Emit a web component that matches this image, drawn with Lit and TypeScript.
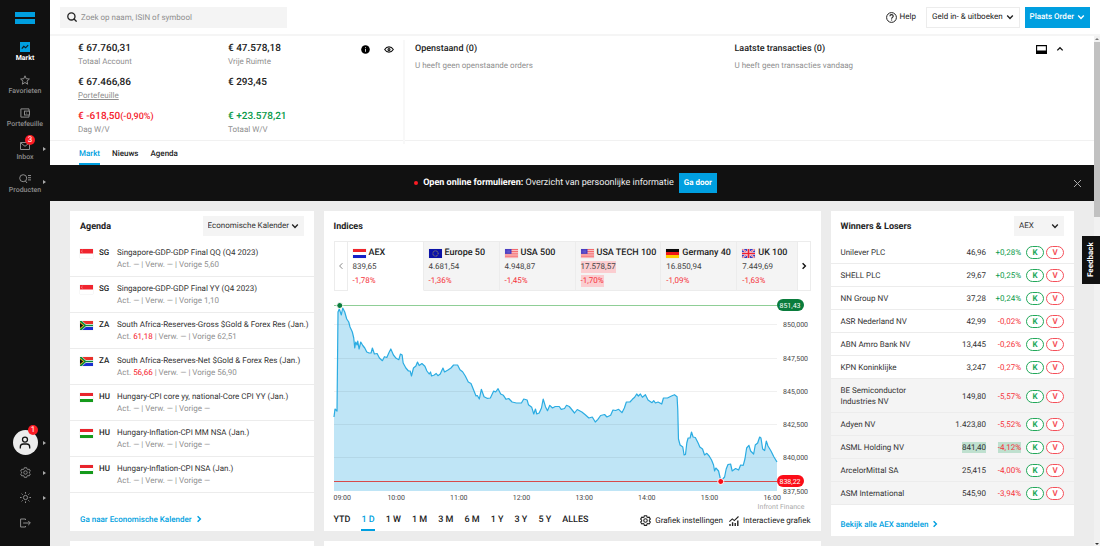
import { LitElement, html, svg, css, nothing } from "lit";
import { customElement, state } from "lit/decorators.js";
import { classMap } from "lit/directives/class-map.js";

type Nav = { id: string; label: string; icon: unknown; badge?: number; more?: boolean };
type Event = { cc: string; title: string; act: string; prev: string };
type Index = { cc: string; name: string; value: string; change: string; flash?: boolean };
type Stock = { name: string; price: string; change: string; flash?: boolean; low?: boolean };

const chevron = (w = 8) => html`<svg class="ico" width=${w} height=${w} viewBox="0 0 8 8"><path d="M1.2 2.6 4 5.4 6.8 2.6" fill="none" stroke="currentColor" stroke-width="1.4" /></svg>`;
const chevronRight = (w = 8, s = 1.4) => html`<svg class="ico" width=${w} height=${w} viewBox="0 0 8 8"><path d="M2.6 1.2 5.4 4 2.6 6.8" fill="none" stroke="currentColor" stroke-width=${s} /></svg>`;

const gear = (size: number, sw: number) => html`<svg class="ico" width=${size} height=${size} viewBox="0 0 12 12" fill="none" stroke="currentColor" stroke-width=${sw} stroke-linejoin="round">
  <path d="M4.7.8h2.6l.3 1.4 1 .6 1.4-.5 1.3 2.2-1.1 1v1.1l1.1 1-1.3 2.2-1.4-.5-1 .6-.3 1.4H4.7l-.3-1.4-1-.6-1.4.5L.7 7.600l1.100-1V5.500L.7 4.500 2 2.300l1.400.5 1-.6z" />
  <circle cx="6" cy="6" r="1.900" /></svg>`;

const NAV: Nav[] = [
  { id: "markt", label: "Markt", icon: html`<svg width="10" height="10" viewBox="0 0 10 10"><rect width="10" height="10" fill="#009fe0" /><path d="M1.800 6.700 3.800 4.400 5.600 5.800 8.200 3.200" fill="none" stroke="#0d1a22" stroke-width="1.200" /></svg>` },
  { id: "favorieten", label: "Favorieten", icon: html`<svg width="10" height="10" viewBox="0 0 10 10"><path d="M5 .8 6.200 3.700 9.400 4 7 6.100 7.700 9.200 5 7.500 2.300 9.200 3 6.100.6 4 3.800 3.700z" fill="none" stroke="currentColor" stroke-width="1" /></svg>` },
  { id: "portefeuille", label: "Portefeuille", icon: html`<svg width="10" height="10" viewBox="0 0 10 10" fill="none" stroke="currentColor"><path d="M9 3V.9H.9v8.200H9V7.200" stroke-width="1" /><rect x="4.500" y="3.100" width="5" height="3.900" stroke-width="1" /><circle cx="6.600" cy="5" r=".5" fill="currentColor" stroke="none" /></svg>` },
  { id: "inbox", label: "Inbox", badge: 3, more: true, icon: html`<svg width="10" height="10" viewBox="0 0 10 10" fill="none" stroke="currentColor"><path d="M.5 1.500h9v7h-9zM.8 2 5 5.300 9.200 2" stroke-width="1" /></svg>` },
  { id: "producten", label: "Producten", more: true, icon: html`<svg width="12" height="10" viewBox="0 0 12 10" fill="none" stroke="currentColor"><circle cx="4.200" cy="4.200" r="3.500" /><path d="M6.300 6.900 8 9M9 1.500h3M9 3.700h3M9 5.900h3" /></svg>` },
];

const EVENTS: Event[] = [
  { cc: "SG", title: "Singapore-GDP-GDP Final QQ (Q4 2023)", act: "", prev: "5,60" },
  { cc: "SG", title: "Singapore-GDP-GDP Final YY (Q4 2023)", act: "", prev: "1,10" },
  { cc: "ZA", title: "South Africa-Reserves-Gross $Gold & Forex Res (Jan.)", act: "61,18", prev: "62,51" },
  { cc: "ZA", title: "South Africa-Reserves-Net $Gold & Forex Res (Jan.)", act: "56,66", prev: "56,90" },
  { cc: "HU", title: "Hungary-CPI core yy, national-Core CPI YY (Jan.)", act: "", prev: "—" },
  { cc: "HU", title: "Hungary-Inflation-CPI MM NSA (Jan.)", act: "", prev: "—" },
  { cc: "HU", title: "Hungary-Inflation-CPI NSA (Jan.)", act: "", prev: "—" },
];

const INDICES: Index[] = [
  { cc: "NL", name: "AEX", value: "839,65", change: "-1,78%" },
  { cc: "EU", name: "Europe 50", value: "4.681,54", change: "-1,36%" },
  { cc: "US", name: "USA 500", value: "4.948,87", change: "-1,45%" },
  { cc: "US", name: "USA TECH 100", value: "17.578,57", change: "-1,70%", flash: true },
  { cc: "DE", name: "Germany 40", value: "16.850,94", change: "-1,09%" },
  { cc: "GB", name: "UK 100", value: "7.449,69", change: "-1,63%" },
];

const STOCKS: Stock[] = [
  { name: "Unilever PLC", price: "46,96", change: "+0,28%" },
  { name: "SHELL PLC", price: "29,67", change: "+0,25%" },
  { name: "NN Group NV", price: "37,28", change: "+0,24%" },
  { name: "ASR Nederland NV", price: "42,99", change: "-0,02%" },
  { name: "ABN Amro Bank NV", price: "13,445", change: "-0,26%" },
  { name: "KPN Koninklijke", price: "3,247", change: "-0,27%" },
  { name: "BE Semiconductor Industries NV", price: "149,80", change: "-5,57%", low: true },
  { name: "Adyen NV", price: "1.423,80", change: "-5,52%", low: true },
  { name: "ASML Holding NV", price: "841,40", change: "-4,12%", low: true, flash: true },
  { name: "ArcelorMittal SA", price: "25,415", change: "-4,00%", low: true },
  { name: "ASM International", price: "545,90", change: "-3,94%", low: true },
];

const RANGES = ["YTD", "1 D", "1 W", "1 M", "3 M", "6 M", "1 Y", "3 Y", "5 Y", "ALLES"];

// Flag drawings, all on an 18 x 12 field.
const FLAGS: Record<string, unknown> = {
  SG: svg`<path fill="#fff" d="M0 0h18v12H0z"/><path fill="#f0252f" d="M0 0h18v6H0z"/><path d="M3.400 1.300a1.900 1.900 0 0 0 0 3.400" fill="none" stroke="#fbb8bb" stroke-width=".8"/>`,
  ZA: svg`<path fill="#fff" d="M0 0h18v12H0z"/><path fill="#e8302a" d="M3 0h15v4H8z"/><path fill="#1a2fd0" d="M3 12h15V8H8z"/><path fill="#0b8a3e" d="M0 0h2.500L8 4.900h10v2.200H8L2.500 12H0z"/><path fill="#ffb915" d="M0 1.300 6 6 0 10.700z"/><path fill="#111" d="M0 2.700 4.400 6 0 9.300z"/>`,
  HU: svg`<path fill="#fff" d="M0 0h18v12H0z"/><path fill="#e8242c" d="M0 0h18v4H0z"/><path fill="#159a1c" d="M0 8h18v4H0z"/>`,
  NL: svg`<path fill="#fff" d="M0 0h18v12H0z"/><path fill="#f0252c" d="M0 0h18v4H0z"/><path fill="#1420c8" d="M0 8h18v4H0z"/>`,
  EU: svg`<path fill="#0b12a8" d="M0 0h18v12H0z"/><circle cx="9" cy="6" r="3.600" fill="none" stroke="#d8c840" stroke-width="1.100" stroke-dasharray="1 .885"/>`,
  US: svg`<path fill="#fbdcdc" d="M0 0h18v12H0z"/><path d="M0 .8h18M0 3.200h18M0 5.600h18M0 8h18M0 10.400h18" stroke="#f25a5e" stroke-width="1.300"/><path fill="#4438c0" d="M0 0h9v6.500H0z"/><path d="M1 1.600h7M1 3.300h7M1 5h7" stroke="#b9b5ee" stroke-width=".6" stroke-dasharray=".8 .9"/>`,
  DE: svg`<path fill="#0a0a0a" d="M0 0h18v4H0z"/><path fill="#f01818" d="M0 4h18v4H0z"/><path fill="#ffce00" d="M0 8h18v4H0z"/>`,
  GB: svg`<path fill="#3a3fc0" d="M0 0h18v12H0z"/><path d="M0 0l18 12M18 0L0 12" stroke="#fff" stroke-width="2.200"/><path d="M0 0l18 12M18 0L0 12" stroke="#f03040" stroke-width="1"/><path d="M9 0v12M0 6h18" stroke="#fff" stroke-width="3.400"/><path d="M9 0v12M0 6h18" stroke="#f02030" stroke-width="2.300"/>`,
};
const flag = (cc: string) => html`<svg class="flag" width="13" height="9" viewBox="0 0 18 12" preserveAspectRatio="none" role="img" aria-label=${cc}>${FLAGS[cc]}</svg>`;

// Intraday line of the AEX, x 0..442 and y 0..195.
const LINE =
  "0,121 1,113 3,115 4,16 5.300,13 7.300,19 8.700,12 10.700,16 12.700,23 14.700,26 16,31 18.300,36 19.700,42 20.700,52 21.700,46 23,49 23.700,45 25,53 26.700,46 28.700,49.500 30.700,52 32.700,56 35,57 37,57 38.300,52 40.300,58 43,57.500 45.300,62 48.300,64.700 50.300,60.700 52.700,61.500 55,56.300 56.700,53 59.300,59 62,62.300 64.700,63.700 66.300,58 68,59 69,67 71.700,72 74.300,75 76,75 77.300,80 79.300,72 81.700,70 83.300,66 85,69.500 87.700,67.500 90.700,70.300 92.700,75 95,78 96.300,76 97.300,80 100,79 102,77.500 103.700,79.700 106,78 108.700,72 110.300,76 113.300,74.300 116.700,72 119.300,69 123.300,69 125.700,73.700 128.300,75.700 131,80 134,86 136.700,87.500 139.300,94 141.700,100 143,99.500 145,103 147,93.300 149.700,100.700 152.700,102.300 156,102 159.300,95 161.300,96 163.700,92.700 166.300,98 169,99.300 171.700,103.300 174.300,102.500 177.700,106 182,107 187,107 189.300,103 192.700,104 194,108.700 197.300,111.300 199.300,118 201,113 202.300,118 204.700,117 207,112 208.700,103 211,110.700 213,114.700 215.300,109.300 218,112 220.700,110.500 224.700,110.500 226.700,113.300 230,112.500 232,109.300 234.700,110.500 236,112 240,117 242.700,113.500 247.300,116 250.700,118.700 254.300,122 257.700,121 260.700,126 263.300,123.300 266,119.500 270,118.500 272.300,121 276,119.300 278.300,114 281,114.500 284,113.300 287.300,116.700 289.700,112 291.700,106 295.300,106 297.700,103.300 300,101.300 302,98 303.700,100 305.700,98 307.700,101.300 310.700,98.700 313.300,104 317.300,106.700 319,104.700 320.700,107 323.300,106 327,108 328.700,102 332.700,102 336.700,100 339.700,98.700 342.300,100.700 343,114 343.700,143 345.300,149 348,151 349.300,159 350.700,158.500 352,147 353.300,142 355.300,142 356.700,136 358.300,141 360.500,141.500 363.300,147 365,151 367.700,153 369.700,159 372,157.300 374.300,160 376.700,164 378.700,169 379.700,175 381,172 383.700,175 386,185 389.700,181 391.300,173 393,168.700 395.700,168 397.300,175 400.700,172.500 403.700,174 405.700,169 408.300,169.300 410,163 411.700,152 414,149.300 415.700,155 418.700,158 420.300,149 422.700,147 424.700,141 426,142 427.700,153 429.700,154.500 431.300,145 433,150 436,155 438.700,160.500 442,166";

const GRID = [
  { y: 28, label: "850,000" },
  { y: 62, label: "847,500" },
  { y: 95, label: "845,000" },
  { y: 128, label: "842,500" },
  { y: 161, label: "840,000" },
  { y: 195, label: "837,500" },
];
const HOURS = ["10:00", "11:00", "12:00", "13:00", "14:00", "15:00", "16:00"];

@customElement("app-root")
export class AppRoot extends LitElement {
  @state() private range = "1 D";
  @state() private index = 0;

  static styles = css`
    :host {
      display: flex;
      height: 100vh;
      overflow: hidden;
      position: relative;
      background: #ececec;
      color: #333;
      font: 400 8px/12px Roboto, "Liberation Sans", sans-serif;
      text-rendering: geometricPrecision;
    }
    * { box-sizing: border-box; }
    button, input, select { font: inherit; color: inherit; margin: 0; border: 0; background: none; padding: 0; border-radius: 0; text-rendering: inherit; }
    button, select { cursor: pointer; }
    a { color: inherit; text-decoration: none; }
    ul, dl, dd, h2, p { margin: 0; padding: 0; list-style: none; }
    svg { display: block; flex: none; }

    .side { width: 50px; flex: none; background: #111; color: #8c8c8c; display: flex; flex-direction: column; justify-content: space-between; padding: 12px 0 11px; }
    .logo { display: grid; gap: 2px; width: 20px; margin: 0 auto 18px; }
    .logo i { height: 5px; background: #009fe0; }
    .nav { display: flex; flex-direction: column; align-items: center; height: 33px; font: 500 7px/9px Roboto, sans-serif; position: relative; width: 100%; }
    .nav svg { margin-bottom: 2px; }
    .nav.on { color: #fff; font-weight: 700; }
    .badge { position: absolute; background: #fb1c24; color: #fff; border-radius: 50%; width: 10px; height: 10px; font: 400 8px/10px Roboto, sans-serif; text-align: center; }
    .nav .badge { left: 25px; top: -6px; }
    .more { position: absolute; left: 43px; width: 0; height: 0; border: 2px solid transparent; border-left: 3px solid #aaa; border-right: 0; top: 50%; margin-top: -2px; }
    .nav .more { top: 8px; }
    .tool { position: relative; width: 50px; height: 25px; display: grid; place-items: center; }
    .avatar { width: 25px; height: 25px; border-radius: 50%; background: #ececec; color: #111; display: grid; place-items: center; }
    .tool .badge { left: 28px; top: -5px; }
    .tools { display: grid; }
    .tools .tool:first-child { margin-bottom: 5px; }

    .main { flex: 1; min-width: 0; display: flex; flex-direction: column; }
    .top { height: 36px; flex: none; background: #fff; border-bottom: 2px solid #f5f5f5; display: flex; align-items: center; padding: 0 10px; }
    .search { display: flex; align-items: center; gap: 4px; background: #f4f4f4; width: 227px; height: 21px; padding: 0 7px; }
    .search input { flex: 1; min-width: 0; outline: 0; height: 21px; }
    .search input::placeholder { color: #8f8f8f; opacity: 1; }
    .help { margin-left: auto; display: flex; align-items: center; gap: 3px; color: #222; }
    .btn { height: 21px; display: flex; align-items: center; gap: 3px; padding: 0 5px; color: #222; }
    .btn.line { border: 1px solid #ececec; margin: 0 5px 0 10px; }
    .btn.fill { background: #009fe0; color: #fff; font-weight: 500; }

    .body { flex: 1; min-height: 0; display: flex; }
    .page { flex: 1; min-width: 0; overflow: hidden; }
    .bar { width: 6px; flex: none; background: #f1f1f1; display: flex; flex-direction: column; align-items: center; justify-content: space-between; padding: 2px 0 1px; }
    .bar .up, .bar .dn { border: 2px solid transparent; border-bottom: 2px solid #777; border-top: 0; }
    .bar .dn { border-top: 2px solid #333; border-bottom: 0; }
    .bar .rail { flex: 1; width: 100%; padding-top: 2px; }
    .bar .thumb { height: 35%; background: #c1c1c1; }

    .account { display: grid; grid-template-columns: 34% 1fr; background: #fff; height: 105px; border-bottom: 1px solid #f1f1f1; }
    .totals { display: grid; grid-template-columns: 283px 1fr; padding: 2px 0 0 28px; border-right: 2px solid #f8f8f8; margin: 4px 0 5px; }
    .totals dl { display: grid; grid-template-columns: 150px 133px; align-content: start; }
    .totals dl div { height: 34px; }
    .totals dt { font: 500 10px/14px Roboto, sans-serif; color: #222; }
    .totals dt small { font-size: 9px; }
    .totals dd { line-height: 12px; color: #8f8f8f; }
    .totals dd a { text-decoration: underline; }
    .peek { display: flex; gap: 14px; align-items: center; height: 14px; color: #111; }
    .orders { display: grid; grid-template-columns: 320fr 330fr; padding: 6px 30px 0 10px; }
    .orders h2 { font: 500 9px/14px Roboto, sans-serif; color: #222; display: flex; align-items: center; }
    .orders p { color: #8f8f8f; padding-top: 4px; }
    .orders .ctl { margin-left: auto; display: flex; gap: 9px; align-items: center; color: #111; }
    .neg { color: #f5333b; }
    .totals dt.neg { color: #f5222d; }
    .pos, .totals dt.pos { color: #0a9a4a; }

    .tabs { display: flex; gap: 12px; background: #fff; height: 24px; padding: 0 29px; }
    .tabs a { line-height: 25px; font-weight: 500; color: #222; height: 24px; }
    .tabs a.on { color: #009fe0; border-bottom: 2px solid #009fe0; }

    .banner { height: 36px; background: #111; color: #eee; display: flex; align-items: center; padding: 0 12px 0 8px; font-size: 9px; }
    .banner p { flex: 1; display: flex; align-items: center; justify-content: center; gap: 5px; }
    .banner i { width: 4px; height: 4px; border-radius: 50%; background: #fb1c24; }
    .banner b { color: #fff; font-weight: 700; }
    .banner .go { background: #009fe0; color: #fff; font: 700 8px/20px Roboto, sans-serif; height: 20px; padding: 0 5px; }
    .banner .x { color: #aaa; }

    .cards { display: grid; grid-template-columns: repeat(4, minmax(0, 1fr)); gap: 10px; padding: 10px 20px; align-items: start; }
    .col { display: grid; grid-template-columns: minmax(0, 1fr); gap: 10px; }
    .col.wide { grid-column: span 2; }
    .card { background: #fff; min-height: 20px; }
    .head { display: flex; align-items: center; justify-content: space-between; height: 30px; padding: 0 10px; }
    .head h2 { font: 700 9px/12px Roboto, sans-serif; color: #222; padding-top: 2px; }
    .pick { display: grid; background: #f4f4f4; height: 20px; align-items: center; }
    .pick select, .pick .ico { grid-area: 1 / 1; }
    .pick .ico { justify-self: end; margin-right: 5px; pointer-events: none; color: #222; }
    .pick select { appearance: none; height: 20px; padding: 0 13px 0 5px; outline: 0; width: 100%; }
    .pick.cal { width: 101px; }
    .pick.aex { width: 50px; }
    .flag { box-shadow: 0 0 1px #ccc; }

    .events li { display: grid; grid-template-columns: 13px 12px 1fr; column-gap: 6px; height: 36px; padding: 6px 10px 0; border-bottom: 1px solid #ececec; align-items: start; white-space: nowrap; }
    .events .flag { margin-top: 2px; }
    .events b { font-weight: 500; line-height: 12px; color: #222; }
    .events .dim { color: #8f8f8f; line-height: 11px; }
    .events .dim em { font-style: normal; color: #f5222d; }
    .all { display: flex; align-items: start; gap: 3px; color: #009fe0; font-weight: 500; padding: 0 10px; line-height: 12px; }
    .all .ico { margin-top: 2px; }
    .agenda .all { padding-top: 20px; height: 38px; line-height: 13px; }
    .wl .all { padding-top: 13px; height: 31px; line-height: 13px; }

    .strip { display: flex; margin: 0 10px; height: 50px; border: 1px solid #ececec; }
    .strip .arrow { width: 13px; flex: none; display: grid; place-items: center; background: #fff; }
    .strip .arrow.prev { border-right: 1px solid #ececec; color: #888; }
    .strip .arrow.next { border-left: 1px solid #ececec; color: #111; }
    .quotes { flex: 1; min-width: 0; display: flex; overflow: hidden; margin: -1px 0; }
    .quote { flex: none; min-width: 76px; padding: 5px 4px 0 5px; text-align: left; background: #f4f4f4; border: 1px solid #ececec; border-left: 0; display: grid; align-content: start; justify-items: start; row-gap: 2px; color: #444; }
    .quote.on { background: #fff; border-bottom-color: #fff; }
    .quote strong { display: flex; align-items: center; gap: 3px; font: 500 9px/12px Roboto, sans-serif; color: #222; white-space: nowrap; }
    .quote span { line-height: 12px; }
    .quote .neg { color: #f5333b; }
    .quote .flash { background: #fbcdd0; }

    .chart { display: grid; grid-template-columns: 1fr 34px; margin: 5px 10px 0; }
    .plot { width: 100%; height: 195px; overflow: visible; display: grid; }
    .plot svg { grid-area: 1 / 1; width: 100%; height: 195px; overflow: visible; }
    .axis { overflow: visible; font-size: 7px; fill: #444; }
    .hours { display: grid; grid-template-columns: 1fr repeat(7, 2fr); grid-column: 1 / 3; margin-right: 7px; text-align: center; font-size: 7px; line-height: 14px; color: #444; }
    .hours span:first-child { text-align: left; }
    .source { grid-column: 1 / 3; text-align: right; color: #aaa; font-size: 7px; line-height: 5px; padding-right: 6px; }
    .foot { display: flex; align-items: center; padding: 0 10px; height: 21px; }
    .ranges { display: flex; gap: 11px; height: 21px; }
    .ranges button { display: block; height: 21px; font: 500 9px/21px Roboto, sans-serif; color: #222; box-shadow: none; }
    .ranges button.on { color: #009fe0; box-shadow: inset 0 -2px #009fe0; }
    .opts { margin-left: auto; display: flex; gap: 6px; }
    .opts a { display: flex; align-items: center; gap: 4px; color: #222; }

    table { width: 100%; table-layout: fixed; border-spacing: 0; }
    td { padding: 5px 0 4px; border-bottom: 1px solid #ececec; text-align: right; line-height: 11px; vertical-align: middle; }
    td.name { text-align: left; padding: 6px 0 5px 10px; }
    tr.low td { background: #f4f4f4; }
    .c-price { width: 50px; }
    .c-pct { width: 35px; }
    .c-act { width: 53px; }
    td .hl { background: #bfe0cf; padding: 1px 0; }
    .acts { display: flex; gap: 2px; padding-left: 5px; }
    .pill { width: 18px; height: 13px; border: 1px solid; border-radius: 7px; font: 700 8px/11px Roboto, sans-serif; text-align: center; background: #fff; }
    .pill.k { color: #22a85a; }
    .pill.v { color: #f5505a; }

    .feedback { position: absolute; right: 0; top: 236px; width: 18px; height: 48px; background: #111; color: #fff; font: 700 8px/18px Roboto, sans-serif; writing-mode: vertical-rl; transform: rotate(180deg); text-align: center; }
  `;

  private sidebar() {
    return html`<nav class="side" aria-label="Hoofdmenu">
      <div>
        <div class="logo"><i></i><i></i></div>
        ${NAV.map((n) => html`<a href="#${n.id}" class=${classMap({ nav: true, on: n.id === "markt" })}>${n.icon}${n.label}
          ${n.badge ? html`<span class="badge">${n.badge}</span>` : nothing}${n.more ? html`<i class="more"></i>` : nothing}</a>`)}
      </div>
      <div class="tools">
        <button class="tool" aria-label="Profiel"><span class="avatar"><svg width="12" height="13" viewBox="0 0 12 13" fill="none" stroke="currentColor" stroke-width="1.300"><circle cx="6" cy="3.600" r="2.500" /><path d="M1.300 12.500V11c0-2 1.400-3 3-3h3.400c1.600 0 3 1 3 3v1.500" /></svg></span><span class="badge">1</span><i class="more"></i></button>
        <button class="tool" aria-label="Instellingen">${gear(11, 1)}<i class="more"></i></button>
        <button class="tool" aria-label="Thema"><svg width="11" height="11" viewBox="0 0 11 11" fill="none" stroke="currentColor"><circle cx="5.500" cy="5.500" r="2.100" /><path d="M5.500 0v1.600M5.500 9.400V11M0 5.500h1.600M9.400 5.500H11M1.600 1.600l1.100 1.100M8.300 8.300l1.100 1.100M9.400 1.600 8.300 2.700M2.700 8.300 1.600 9.400" /></svg><i class="more"></i></button>
        <button class="tool" aria-label="Uitloggen"><svg width="11" height="10" viewBox="0 0 11 10" fill="none" stroke="currentColor"><path d="M5.500 2V1H.6v8h4.900V8M3.200 5h7M8.200 2.900 10.300 5 8.200 7.100" /></svg></button>
      </div>
    </nav>`;
  }

  private topbar() {
    return html`<header class="top">
      <label class="search"><svg width="10" height="10" viewBox="0 0 10 10" fill="none" stroke="#222" stroke-width="1.300"><circle cx="4.400" cy="4.400" r="3.600" /><path d="M7 7l2.600 2.600" /></svg>
        <input type="search" aria-label="Zoeken" placeholder="Zoek op naam, ISIN of symbool" /></label>
      <a class="help" href="#help"><svg width="11" height="11" viewBox="0 0 11 11" fill="none" stroke="#222"><circle cx="5.500" cy="5.500" r="4.900" stroke-width="1" /><path d="M3.900 4.300c0-2.200 3.300-2.200 3.300-.1 0 1.200-1.600 1.200-1.600 2.500" stroke-width="1.100" /><path d="M5.600 7.500v1.100" stroke-width="1.100" /></svg>Help</a>
      <button class="btn line">Geld in- &amp; uitboeken ${chevron()}</button>
      <button class="btn fill">Plaats Order ${chevron()}</button>
    </header>`;
  }

  private account() {
    return html`<section class="account">
      <div class="totals">
        <dl>
          <div><dt>€ 67.760,31</dt><dd>Totaal Account</dd></div>
          <div><dt>€ 47.578,18</dt><dd>Vrije Ruimte</dd></div>
          <div><dt>€ 67.466,86</dt><dd><a href="#portefeuille">Portefeuille</a></dd></div>
          <div><dt>€ 293,45</dt></div>
          <div><dt class="neg">€ -618,50<small>(-0,90%)</small></dt><dd>Dag W/V</dd></div>
          <div><dt class="pos">€ +23.578,21</dt><dd>Totaal W/V</dd></div>
        </dl>
        <div class="peek">
          <button aria-label="Informatie"><svg width="9" height="9" viewBox="0 0 9 9"><circle cx="4.500" cy="4.500" r="4.300" fill="#000" /><path d="M4.500 4v2.800M4.500 2.200v1" stroke="#fff" stroke-width=".8" /></svg></button>
          <button aria-label="Bedragen verbergen"><svg width="10" height="7" viewBox="0 0 10 7" fill="none" stroke="#111" stroke-width="1.100"><path d="M.7 3.500C2.800 0 7.200 0 9.300 3.500 7.200 7 2.800 7 .7 3.500z" /><circle cx="5" cy="3.500" r="1" /></svg></button>
        </div>
      </div>
      <div class="orders">
        <div><h2>Openstaand (0)</h2><p>U heeft geen openstaande orders</p></div>
        <div><h2>Laatste transacties (0)
          <span class="ctl"><button aria-label="Paneel"><svg width="11" height="9" viewBox="0 0 11 9"><path d="M.6.6h9.800v7.800H.6z" fill="#fff" stroke="#000" stroke-width="1.100" /><path d="M0 5.500h11V9H0z" /></svg></button>
          <button aria-label="Inklappen"><svg width="8" height="8" viewBox="0 0 8 8"><path d="M1.300 5.400 4 2.700 6.700 5.400" fill="none" stroke="#111" stroke-width="1.300" /></svg></button></span></h2>
          <p>U heeft geen transacties vandaag</p></div>
      </div>
    </section>
    <nav class="tabs" aria-label="Markt"><a class="on" href="#markt">Markt</a><a href="#nieuws">Nieuws</a><a href="#agenda">Agenda</a></nav>
    <div class="banner">
      <p><i></i><span><b>Open online formulieren:</b> Overzicht van persoonlijke informatie</span><button class="go">Ga door</button></p>
      <button class="x" aria-label="Sluiten"><svg width="9" height="9" viewBox="0 0 9 9"><path d="M1 1l7 7M8 1L1 8" stroke="currentColor" stroke-width="1" /></svg></button>
    </div>`;
  }

  private agenda() {
    return html`<section class="card agenda">
      <div class="head"><h2>Agenda</h2>
        <label class="pick cal"><select aria-label="Kalender"><option>Economische Kalender</option></select>${chevron()}</label></div>
      <ul class="events">${EVENTS.map((e) => html`<li>${flag(e.cc)}<b>${e.cc}</b><div><p>${e.title}</p>
        <p class="dim">Act. ${e.act ? html`<em>${e.act}</em>` : "—"} | Verw. — | Vorige ${e.prev}</p></div></li>`)}</ul>
      <a class="all" href="#kalender">Ga naar Economische Kalender ${chevronRight()}</a>
    </section>`;
  }

  private chart() {
    return html`<div class="chart">
      <div class="plot">
        <svg viewBox="0 0 442 195" preserveAspectRatio="none">
          <polygon points="0,195 ${LINE} 442,195" fill="#bfe5f6" />
          ${GRID.slice(0, 5).map((g) => svg`<path d="M0 ${g.y + 0.5}H442" stroke="#000" stroke-opacity=".06" />`)}
          <path d="M0 9.500H442" stroke="#8fce96" />
          <path d="M0 185.500H442" stroke="#d84a4a" />
          <polyline points=${LINE} fill="none" stroke="#2bace2" stroke-width="1.200" stroke-linejoin="round" vector-effect="non-scaling-stroke" />
        </svg>
        <svg><circle cx="1.300%" cy="9.500" r="3" fill="#0a7c3c" stroke="#fff" /><circle cx="87.300%" cy="185.500" r="3" fill="#fb0d18" stroke="#fff" /></svg>
      </div>
      <svg class="axis" width="34" height="195" text-anchor="end">
        ${GRID.map((g) => svg`<text x="31" y=${g.y + 3}>${g.label}</text>`)}
        <rect x="0" y="3" width="27" height="12" rx="6" fill="#0a7c3c" />
        <rect x="0" y="179" width="27" height="12" rx="6" fill="#fb0d18" />
        <g text-anchor="middle" fill="#fff"><text x="13" y="12">851,43</text><text x="13" y="188">838,22</text></g>
      </svg>
      <div class="hours"><span>09:00</span>${HOURS.map((h) => html`<span>${h}</span>`)}</div>
      <p class="source">Infront Finance</p>
    </div>`;
  }

  private indices() {
    return html`<section class="card">
      <div class="head"><h2>Indices</h2></div>
      <div class="strip">
        <button class="arrow prev" aria-label="Vorige"><svg width="8" height="8" viewBox="0 0 8 8"><path d="M5.400 1.200 2.600 4 5.400 6.800" fill="none" stroke="currentColor" /></svg></button>
        <div class="quotes">${INDICES.map((q, i) => html`<button class=${classMap({ quote: true, on: i === this.index })} @click=${() => (this.index = i)}>
          <strong>${flag(q.cc)}${q.name}</strong><span class=${classMap({ flash: !!q.flash })}>${q.value}</span><span class=${classMap({ neg: true, flash: !!q.flash })}>${q.change}</span></button>`)}</div>
        <button class="arrow next" aria-label="Volgende">${chevronRight()}</button>
      </div>
      ${this.chart()}
      <div class="foot">
        <div class="ranges">${RANGES.map((r) => html`<button class=${classMap({ on: r === this.range })} @click=${() => (this.range = r)}>${r}</button>`)}</div>
        <div class="opts">
          <a href="#instellingen">${gear(11, 1.2)}Grafiek instellingen</a>
          <a href="#grafiek"><svg width="10" height="10" viewBox="0 0 10 10" fill="none" stroke="currentColor"><path d="M.4 5.700 3.300 2.900 5.300 4.600 9.500.5" stroke-width="1.100" /><path d="M1 10V8M3.600 10V6.300M6.200 10V7M8.800 10V4.500" stroke-width="1.400" /></svg>Interactieve grafiek</a>
        </div>
      </div>
    </section>`;
  }

  private winners() {
    return html`<section class="card wl">
      <div class="head"><h2>Winners &amp; Losers</h2>
        <label class="pick aex"><select aria-label="Index"><option>AEX</option></select>${chevron()}</label></div>
      <table>
        <colgroup><col /><col class="c-price" /><col class="c-pct" /><col class="c-act" /></colgroup>
        <tbody>${STOCKS.map((s) => html`<tr class=${classMap({ low: !!s.low })}>
          <td class="name">${s.name}</td>
          <td><span class=${classMap({ hl: !!s.flash })}>${s.price}</span></td>
          <td><span class=${classMap({ hl: !!s.flash, neg: s.change[0] === "-", pos: s.change[0] === "+" })}>${s.change}</span></td>
          <td><div class="acts"><button class="pill k" aria-label="Koop ${s.name}">K</button><button class="pill v" aria-label="Verkoop ${s.name}">V</button></div></td>
        </tr>`)}</tbody>
      </table>
      <a class="all" href="#aex">Bekijk alle AEX aandelen ${chevronRight()}</a>
    </section>`;
  }

  render() {
    return html`${this.sidebar()}
      <div class="main">
        ${this.topbar()}
        <div class="body">
          <main class="page">
            ${this.account()}
            <div class="cards">
              <div class="col">${this.agenda()}<section class="card"></section></div>
              <div class="col wide">${this.indices()}<section class="card"></section></div>
              <div class="col">${this.winners()}</div>
            </div>
          </main>
          <div class="bar" aria-hidden="true"><i class="up"></i><div class="rail"><div class="thumb"></div></div><i class="dn"></i></div>
        </div>
      </div>
      <button class="feedback">Feedback</button>`;
  }
}
